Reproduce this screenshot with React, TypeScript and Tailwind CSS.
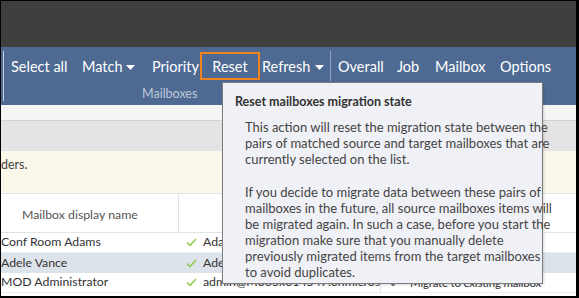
import React from "react";

const font = { fontFamily: 'Lato, "Noto Sans", sans-serif' };

function Caret() {
  return (
    <svg width="9" height="5" viewBox="0 0 9 5" className="ml-[6px] mt-[3px] shrink-0">
      <polygon points="0,0 9,0 4.5,5" fill="#ffffff" />
    </svg>
  );
}

function Check({ color = "#8dc63f" }: { color?: string }) {
  return (
    <svg width="11" height="9" viewBox="0 0 11 9" className="shrink-0">
      <polyline points="1,4.5 4,7.5 10,1" fill="none" stroke={color} strokeWidth="1.4" />
    </svg>
  );
}

const rows = [
  { name: "Conf Room Adams", email: "Adams@M365x014547.OnMicrosoft.com", sel: false },
  { name: "Adele Vance", email: "AdeleV@M365x014547.OnMicrosoft.com", sel: true },
  { name: "MOD Administrator", email: "admin@M365x014547.onmicrosoft.com", sel: false },
];

export default function App() {
  return (
    <div
      className="relative w-[579px] h-[298px] overflow-hidden bg-white border-t border-l border-r-[3px] border-b-[2px] border-black flex flex-col"
      style={font}
    >
      {/* dark top bar */}
      <div className="h-[46px] shrink-0 bg-[#3f3f3f]" />

      {/* ribbon */}
      <div className="h-[58px] shrink-0 bg-[#4e6a93] flex items-start pt-[4px] pl-[2px] whitespace-nowrap">
        <div className="w-px h-[50px] bg-[#c5cedb] shrink-0" />
        <div className="flex flex-col pt-px">
          <div className="flex items-center h-[28px] text-white text-[14.5px] leading-none">
            <span className="ml-[7px] w-[55px] shrink-0 pt-[3px]">Select all</span>
            <span className="ml-[16px] w-[38px] shrink-0 pt-[3px]">Match</span>
            <Caret />
            <span className="ml-[17px] w-[44px] shrink-0 pt-[3px]">Priority</span>
            <div className="ml-[4px] h-[28px] w-[60px] shrink-0 flex items-center justify-center border-2 border-[#f0831f] pt-[3px]">
              Reset
            </div>
            <span className="ml-[2px] w-[47px] shrink-0 pt-[3px]">Refresh</span>
            <Caret />
          </div>
          <div className="h-[24px] flex items-center text-[12.5px] text-[#bcc7d7] pl-[138px] pt-[5px]">
            Mailboxes
          </div>
        </div>
        <div className="w-px h-[30px] bg-[#8fa2bf] ml-[6px] shrink-0" />
        <div className="flex items-center h-[29px] pt-[4px] text-white text-[14.5px] leading-none">
          <span className="ml-[7px] w-[43px] shrink-0">Overall</span>
          <span className="ml-[16px] w-[22px] shrink-0">Job</span>
          <span className="ml-[16px] w-[49px] shrink-0">Mailbox</span>
          <span className="ml-[16px] w-[49px] shrink-0">Options</span>
        </div>
      </div>

      {/* light strip */}
      <div className="h-[16px] shrink-0 bg-[#f5f5f5] border-b border-[#d2d2d2]" />
      {/* gray strip */}
      <div className="h-[30px] shrink-0 bg-[#e4e4e4]" />
      {/* yellow info */}
      <div className="h-[43px] shrink-0 bg-[#fbf7eb] border-b border-[#e3e3e3] text-[12.5px] text-[#444] pt-[4px]">
        <div className="h-[20px] flex items-center">ders.</div>
      </div>

      {/* table */}
      <div className="flex-1 flex flex-col text-[12.3px] text-[#333]">
        <div className="h-[39px] shrink-0 flex border-b border-[#e3e3e3]">
          <div className="w-[178px] border-r border-[#e3e3e3] flex items-center pl-[21px] pt-[5px] text-[#555]">
            Mailbox display name
          </div>
          <div className="w-[200px] border-r border-[#e3e3e3]" />
          <div className="flex-1" />
        </div>
        {rows.map((r) => (
          <div
            key={r.name}
            className={`h-[20px] shrink-0 flex items-center ${r.sel ? "bg-[#dde3ea]" : "border-b border-[#ececec]"}`}
          >
            <div className="w-[178px] shrink-0 h-full flex items-center whitespace-nowrap overflow-hidden">{r.name}</div>
            <div className="w-[201px] shrink-0 h-full flex items-center whitespace-nowrap overflow-hidden pl-[7px] gap-[6px]">
              <Check />
              <span>{r.email}</span>
            </div>
            <div className="flex-1 h-full flex items-center whitespace-nowrap overflow-hidden pl-[8px] gap-[6px] border-l border-[#e3e3e3]">
              <Check color="#666" />
              <span className="text-[11.5px] tracking-[-0.2px] pl-[4px]">Migrate to existing mailbox</span>
            </div>
          </div>
        ))}
      </div>

      {/* tooltip */}
      <div className="absolute left-[221px] top-[81px] w-[321px] h-[202px] bg-[#f0f1f6] border border-[#7d7d7d] shadow-[1px_1px_2px_rgba(0,0,0,0.15)] leading-[16px] whitespace-nowrap">
        <div className="pt-[11px] pl-[12px] font-bold text-[12.5px] text-[#333]">Reset mailboxes migration state</div>
        <div className="mt-[9px] pl-[22px] text-[13px] text-[#444]">
          <p>
            This action will reset the migration state between the
            <br />
            pairs of matched source and target mailboxes that are
            <br />
            currently selected on the list.
          </p>
          <p className="mt-[17px]">
            If you decide to migrate data between these pairs of
            <br />
            mailboxes in the future, all source mailboxes items will
            <br />
            be migrated again. In such a case, before you start the
            <br />
            migration make sure that you manually delete
            <br />
            previously migrated items from the target mailboxes
            <br />
            to avoid duplicates.
          </p>
        </div>
      </div>
    </div>
  );
}
